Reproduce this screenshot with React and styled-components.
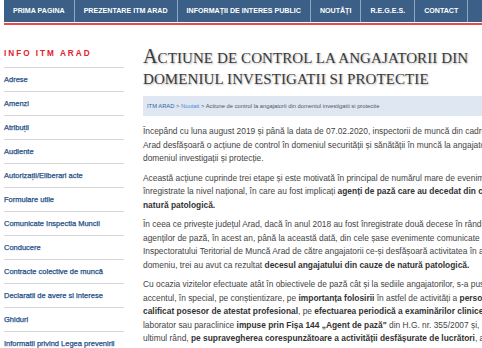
import React from "react";
import styled, { createGlobalStyle } from "styled-components";

const GlobalStyle = createGlobalStyle`
  body {
    margin: 0;
    overflow: hidden;
    background: #fff;
    font-family: "Liberation Sans", Arial, sans-serif;
  }
`;

const menu = [
  "PRIMA PAGINA",
  "PREZENTARE ITM ARAD",
  "INFORMAȚII DE INTERES PUBLIC",
  "NOUTĂȚI",
  "R.E.G.E.S.",
  "CONTACT",
  "",
];

const links = [
  "Adrese",
  "Amenzi",
  "Atribuții",
  "Audiente",
  "Autorizații/Eliberari acte",
  "Formulare utile",
  "Comunicate Inspectia Muncii",
  "Conducere",
  "Contracte colective de muncă",
  "Declaratii de avere si interese",
  "Ghiduri",
  "Informatii privind Legea prevenirii nr. 371/2017",
];

const App = () => {
  return (
    <Page>
      <GlobalStyle />
      <Nav>
        {menu.map((item, index) => (
          <NavItem key={index}>{item}</NavItem>
        ))}
      </Nav>
      <Layout>
        <Sidebar>
          <SideTitle>INFO ITM ARAD</SideTitle>
          {links.map((link) => (
            <SideLink key={link}>{link}</SideLink>
          ))}
        </Sidebar>
        <Main>
          <Title>
            <TitleLine>Actiune de control la angajatorii din</TitleLine>
            <TitleLine>domeniul investigatii si protectie</TitleLine>
          </Title>
          <Crumbs>
            <CrumbLink>ITM ARAD</CrumbLink> &gt;{" "}
            <CrumbLink light>Noutati</CrumbLink> &gt; Actiune de control la
            angajatorii din domeniul investigatii si protectie
          </Crumbs>
          <Para>
            Începând cu luna august 2019 și până la data de 07.02.2020,
            inspectorii de muncă din cadrul ITM
            <br />
            Arad desfășoară o acțiune de control în domeniul securității și
            sănătății în muncă la angajatorii din
            <br />
            domeniul investigații și protecție.
          </Para>
          <Para>
            Această acțiune cuprinde trei etape și este motivată în principal
            de numărul mare de evenimente
            <br />
            înregistrate la nivel național, în care au fost implicați{" "}
            <b>agenți de pază care au decedat din cauze de</b>
            <br />
            <b>natură patologică.</b>
          </Para>
          <Para>
            În ceea ce privește județul Arad, dacă în anul 2018 au fost
            înregistrate două decese în rândul
            <br />
            agenților de pază, în acest an, până la această dată, din cele șase
            evenimente comunicate
            <br />
            Inspectoratului Teritorial de Muncă Arad de către angajatorii ce-și
            desfășoară activitatea în acest
            <br />
            domeniu, trei au avut ca rezultat{" "}
            <b>decesul angajatului din cauze de natură patologică.</b>
          </Para>
          <Para>
            Cu ocazia vizitelor efectuate atât în obiectivele de pază cât și la
            sediile angajatorilor, s-a pus
            <br />
            accentul, în special, pe conștientizare, pe{" "}
            <b>importanța folosirii</b> în astfel de activități a{" "}
            <b>personalului</b>
            <br />
            <b>calificat posesor de atestat profesional</b>, pe{" "}
            <b>efectuarea periodică a examinărilor clinice</b>, de
            <br />
            laborator sau paraclinice <b>impuse prin Fișa 144 „Agent de pază"</b>{" "}
            din H.G. nr. 355/2007 și, nu în
            <br />
            ultimul rând,{" "}
            <b>
              pe supravegherea corespunzătoare a activității desfășurate de
              lucrători
            </b>
            , atunci
            <br />
            când aceștia desfășoară activități în condiții de izolare.
          </Para>
        </Main>
      </Layout>
    </Page>
  );
};

const Page = styled.div`
  padding-left: 4px;
  width: 700px;
`;

const Nav = styled.div`
  display: flex;
  height: 22px;
  background-color: #3b5f86;
  border-bottom: 1px solid #fff;
  box-shadow: 0 2px 0 #e84a4a;
  margin-bottom: 2px;
`;

const NavItem = styled.div`
  display: flex;
  align-items: center;
  padding: 0 9px;
  border-right: 1px solid #8ea8c4;
  color: #fff;
  font-size: 7.1px;
  font-weight: bold;
  white-space: nowrap;
`;

const Layout = styled.div`
  display: flex;
  gap: 19px;
  padding-top: 21px;
`;

const Sidebar = styled.div`
  width: 120px;
  flex-shrink: 0;
`;

const SideTitle = styled.div`
  color: #e3202b;
  font-size: 8.2px;
  font-weight: bold;
  letter-spacing: 2px;
  padding: 3px 0 9px;
  border-bottom: 1px solid #d6d6d6;
`;

const SideLink = styled.div`
  padding: 7.5px 0;
  line-height: 8px;
  color: #1f4f88;
  font-size: 7.5px;
  -webkit-text-stroke: 0.25px #1f4f88;
  border-bottom: 1px solid #d6d6d6;
`;

const Main = styled.div`
  flex: 1;
`;

const Title = styled.h1`
  margin: 0;
  font-family: "Liberation Serif", "DejaVu Serif", serif;
  font-weight: normal;
  font-size: 15px;
  line-height: 20.5px;
  letter-spacing: 0.1px;
  text-transform: uppercase;
  color: #3a3a3a;
  text-shadow: 1px 1px 2px rgba(0, 0, 0, 0.3);
`;

const TitleLine = styled.div`
  white-space: nowrap;

  &:first-child::first-letter {
    font-size: 20px;
  }
`;

const Crumbs = styled.div`
  margin: 7px 0 9px;
  padding: 7px 4px;
  line-height: 6px;
  background-color: #dfe7f2;
  color: #555;
  font-size: 5.8px;
  white-space: nowrap;
`;

const CrumbLink = styled.span`
  color: ${(props) => (props.light ? "#4a8ad4" : "#2f64a8")};
`;

const Para = styled.p`
  margin: 0 0 6px;
  color: #444;
  font-size: 8.4px;
  line-height: 13.5px;
  white-space: nowrap;

  b {
    color: #333;
  }
`;

export default App;
